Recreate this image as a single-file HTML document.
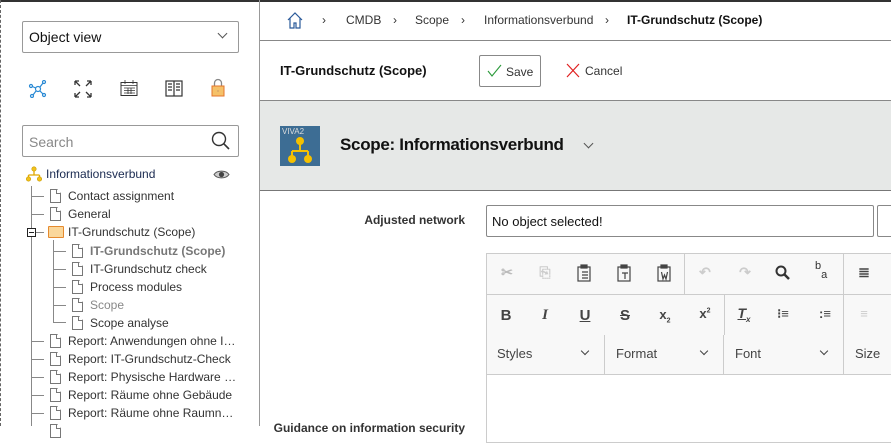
<!DOCTYPE html>
<html><head><meta charset="utf-8"><style>
*{box-sizing:border-box;margin:0;padding:0}
body{width:891px;height:426px;overflow:hidden;font-family:"Liberation Sans",Arial,sans-serif;font-size:13px;color:#222;background:#fff;position:relative}
.a{position:absolute}
.tr{position:absolute;font-size:12px;color:#333;white-space:nowrap}
.doc{position:absolute;width:11px;height:14px;border:1px solid #777;background:#fff;clip-path:polygon(0 0,65% 0,100% 30%,100% 100%,0 100%)}
.doc:after{content:"";position:absolute;right:-1px;top:-1px;width:4px;height:4px;border-left:1px solid #777;border-bottom:1px solid #777}
.hl{position:absolute;height:1px;background:#888}
.vl{position:absolute;width:1px;background:#888}
.tb{position:absolute;font-size:14px;color:#444;font-weight:bold;text-align:center;width:20px}
</style></head><body>
<div class="a" style="left:0;top:0;width:891px;height:2px;background:#333"></div>
<div class="a" style="left:0;top:0;width:1px;height:426px;border-left:1px dashed #666"></div>
<div class="a" style="left:259px;top:0;width:1px;height:426px;background:#999"></div>
<div class="a" style="left:22px;top:21px;width:217px;height:32px;border:1px solid #999;border-radius:2px;padding:7px 6px;font-size:14px;color:#111">Object view<span class="a" style="right:12px;top:8px;width:7px;height:7px;border-right:1.2px solid #555;border-bottom:1.2px solid #555;transform:rotate(45deg)"></span></div>
<svg class="a" style="left:28px;top:80px" width="20" height="18" viewBox="0 0 20 18"><g stroke="#2a8ad4" stroke-width="1.2" fill="none"><circle cx="10" cy="9" r="2.5"/><circle cx="3" cy="6" r="1.5"/><circle cx="16" cy="2" r="1.5"/><circle cx="16" cy="15" r="1.5"/><circle cx="4" cy="16" r="1.5"/><path d="M4.4 6.5 7.7 8M11.8 7.2 15 3M11.8 10.8 15 14M8 11 5 15"/></g></svg>
<svg class="a" style="left:74px;top:80px" width="18" height="18" viewBox="0 0 18 18"><g stroke="#333" stroke-width="1.3" fill="none"><path d="M1 1l5 5M1 1h4M1 1v4M17 1l-5 5M17 1h-4M17 1v4M1 17l5-5M1 17h4M1 17v-4M17 17l-5-5M17 17h-4M17 17v-4"/></g></svg>
<svg class="a" style="left:120px;top:80px" width="18" height="17" viewBox="0 0 18 17"><g stroke="#333" fill="none"><rect x="1" y="2.5" width="16" height="13"/><path d="M1 5.5h16M5 0v4M13 0v4M4 8h11M4 10.5h11M4 13h11M8 8v6M11 8v6" stroke-width=".8"/></g></svg>
<svg class="a" style="left:165px;top:80px" width="18" height="17" viewBox="0 0 18 17"><g stroke="#333" fill="none" stroke-width="1.2"><rect x="1" y="1" width="16" height="15"/><path d="M9 1v15M3 4h4M3 7h4M3 10h4M11 4h4M11 7h4M11 10h4"/></g></svg>
<svg class="a" style="left:211px;top:78px" width="14" height="19" viewBox="0 0 14 19"><path d="M3.5 8V5a3.5 3.5 0 0 1 7 0v3" stroke="#888" stroke-width="1.3" fill="none"/><rect x="1" y="8" width="12" height="10" fill="#f5c169" stroke="#e5752a"/><rect x="6.5" y="12" width="1" height="2" fill="#c96"/></svg>
<div class="a" style="left:22px;top:125px;width:217px;height:32px;border:1px solid #999;border-radius:2px;padding:8px 6px;font-size:14px;color:#888">Search</div>
<svg class="a" style="left:211px;top:131px" width="20" height="20" viewBox="0 0 20 20"><circle cx="8" cy="8" r="6.5" stroke="#333" stroke-width="1.4" fill="none"/><path d="M12.6 12.6 18 18" stroke="#333" stroke-width="1.6"/></svg>
<svg class="a" style="left:26px;top:166px" width="16" height="16" viewBox="0 0 16 16"><g fill="#f2c21b" stroke="#c99a00" stroke-width=".6"><circle cx="8" cy="3" r="2.2"/><circle cx="2.5" cy="13" r="2.2"/><circle cx="13.5" cy="13" r="2.2"/></g><path d="M8 5v4M2.5 9h11M2.5 9v2M13.5 9v2" stroke="#e0a800" stroke-width="1.3" fill="none"/></svg>
<div class="tr" style="left:46px;top:167px;color:#1a2a50">Informationsverbund</div>
<svg class="a" style="left:213px;top:169px" width="17" height="11" viewBox="0 0 17 11"><path d="M1 5.5C4 1 13 1 16 5.5 13 10 4 10 1 5.5Z" stroke="#555" fill="#ccc" stroke-width="1"/><circle cx="8.5" cy="5.5" r="2.6" fill="#444"/></svg>
<div class="vl" style="left:31px;top:186px;height:240px"></div>
<div class="hl" style="left:32px;top:196px;width:12px"></div><div class="doc" style="left:50px;top:189px"></div><div class="tr" style="left:68px;top:189px">Contact assignment</div>
<div class="hl" style="left:32px;top:214px;width:12px"></div><div class="doc" style="left:50px;top:207px"></div><div class="tr" style="left:68px;top:207px">General</div>
<div class="a" style="left:27px;top:228px;width:9px;height:9px;border:1px solid #222;background:#fff"><div class="a" style="left:1px;top:3px;width:5px;height:1px;background:#222"></div></div>
<div class="hl" style="left:36px;top:232px;width:8px"></div>
<div class="a" style="left:48px;top:226px;width:16px;height:12px;background:#fad79b;border:1px solid #e58a2f;border-radius:1px"></div>
<div class="tr" style="left:68px;top:225px">IT-Grundschutz (Scope)</div>
<div class="vl" style="left:53px;top:240px;height:83px"></div>
<div class="hl" style="left:54px;top:251px;width:12px"></div><div class="doc" style="left:72px;top:244px"></div><div class="tr" style="left:90px;top:244px;color:#777;font-weight:bold">IT-Grundschutz (Scope)</div>
<div class="hl" style="left:54px;top:269px;width:12px"></div><div class="doc" style="left:72px;top:262px"></div><div class="tr" style="left:90px;top:262px">IT-Grundschutz check</div>
<div class="hl" style="left:54px;top:287px;width:12px"></div><div class="doc" style="left:72px;top:280px"></div><div class="tr" style="left:90px;top:280px">Process modules</div>
<div class="hl" style="left:54px;top:305px;width:12px"></div><div class="doc" style="left:72px;top:298px"></div><div class="tr" style="left:90px;top:298px;color:#888">Scope</div>
<div class="hl" style="left:54px;top:322px;width:12px"></div><div class="doc" style="left:72px;top:316px"></div><div class="tr" style="left:90px;top:316px">Scope analyse</div>
<div class="hl" style="left:32px;top:341px;width:12px"></div><div class="doc" style="left:50px;top:334px"></div><div class="tr" style="left:68px;top:334px">Report: Anwendungen ohne I…</div>
<div class="hl" style="left:32px;top:359px;width:12px"></div><div class="doc" style="left:50px;top:352px"></div><div class="tr" style="left:68px;top:352px">Report: IT-Grundschutz-Check</div>
<div class="hl" style="left:32px;top:377px;width:12px"></div><div class="doc" style="left:50px;top:370px"></div><div class="tr" style="left:68px;top:370px">Report: Physische Hardware …</div>
<div class="hl" style="left:32px;top:395px;width:12px"></div><div class="doc" style="left:50px;top:388px"></div><div class="tr" style="left:68px;top:388px">Report: Räume ohne Gebäude</div>
<div class="hl" style="left:32px;top:413px;width:12px"></div><div class="doc" style="left:50px;top:406px"></div><div class="tr" style="left:68px;top:406px">Report: Räume ohne Raumn…</div>
<div class="doc" style="left:50px;top:424px"></div>
<svg class="a" style="left:287px;top:12px" width="16" height="17" viewBox="0 0 16 17"><path d="M1 8 8 1l7 7M3 6v10h4v-5h2v5h4V6" stroke="#2a5a9a" stroke-width="1.2" fill="none"/></svg>
<div class="a" style="left:322px;top:13px;font-size:12px;color:#333">›</div>
<div class="a" style="left:346px;top:13px;font-size:12px;color:#333">CMDB</div>
<div class="a" style="left:393px;top:13px;font-size:12px;color:#333">›</div>
<div class="a" style="left:415px;top:13px;font-size:12px;color:#333">Scope</div>
<div class="a" style="left:461px;top:13px;font-size:12px;color:#333">›</div>
<div class="a" style="left:484px;top:13px;font-size:12px;color:#333">Informationsverbund</div>
<div class="a" style="left:605px;top:13px;font-size:12px;color:#333">›</div>
<div class="a" style="left:627px;top:13px;font-size:12px;font-weight:bold;color:#111">IT-Grundschutz (Scope)</div>
<div class="a" style="left:260px;top:40px;width:631px;height:1px;background:#888"></div>
<div class="a" style="left:280px;top:63px;font-size:13px;font-weight:bold;color:#111">IT-Grundschutz (Scope)</div>
<div class="a" style="left:479px;top:55px;width:62px;height:32px;border:1px solid #888;border-radius:2px;font-size:12px;color:#333;padding:9px 0 0 26px">Save</div>
<svg class="a" style="left:487px;top:64px" width="15" height="13" viewBox="0 0 15 13"><path d="M1 7l4 5 9-11" stroke="#2a9a3a" stroke-width="1.1" fill="none"/></svg>
<svg class="a" style="left:566px;top:63px" width="14" height="15" viewBox="0 0 14 15"><path d="M1 1l12 13M13 1 1 14" stroke="#e02020" stroke-width="1.2"/></svg>
<div class="a" style="left:585px;top:64px;font-size:12px;color:#333">Cancel</div>
<div class="a" style="left:260px;top:100px;width:631px;height:91px;background:#e6e8e7;border-top:1px solid #888;border-bottom:1px solid #777"></div>
<div class="a" style="left:280px;top:126px;width:40px;height:40px;background:#3d6d94"></div>
<div class="a" style="left:282px;top:127px;font-size:8px;color:#ddd">VIVA2</div>
<svg class="a" style="left:287px;top:135px" width="26" height="30" viewBox="0 0 26 30"><g fill="#f5c000"><circle cx="13" cy="6" r="4"/><circle cx="5" cy="24" r="4"/><circle cx="21" cy="24" r="4"/></g><path d="M13 9v7M5 16h16M5 16v5M21 16v5" stroke="#f5c000" stroke-width="2" fill="none"/></svg>
<div class="a" style="left:340px;top:135px;font-size:17px;font-weight:bold;color:#111;letter-spacing:-.3px">Scope: Informationsverbund</div>
<span class="a" style="left:585px;top:140px;width:7px;height:7px;border-right:1.2px solid #555;border-bottom:1.2px solid #555;transform:rotate(45deg)"></span>
<div class="a" style="left:300px;top:213px;width:165px;text-align:right;font-size:12px;font-weight:bold;color:#333">Adjusted network</div>
<div class="a" style="left:486px;top:205px;width:388px;height:32px;border:1px solid #888;border-radius:2px;padding:8px 5px;font-size:13px;color:#111">No object selected!</div>
<div class="a" style="left:877px;top:205px;width:20px;height:32px;border:1px solid #888;border-radius:2px"></div>
<div class="a" style="left:486px;top:253px;width:410px;height:190px;border:1px solid #ccc"></div>
<div class="a" style="left:487px;top:254px;width:410px;height:120px;background:#f8f8f8"></div>
<div class="a" style="left:486px;top:294px;width:410px;height:1px;background:#ccc"></div>
<div class="a" style="left:486px;top:374px;width:410px;height:1px;background:#ccc"></div>
<div class="a" style="left:684px;top:254px;width:1px;height:40px;background:#ccc"></div>
<div class="a" style="left:843px;top:254px;width:1px;height:40px;background:#ccc"></div>
<div class="a" style="left:724px;top:295px;width:1px;height:40px;background:#ccc"></div>
<div class="a" style="left:843px;top:295px;width:1px;height:40px;background:#ccc"></div>
<div class="a" style="left:604px;top:335px;width:1px;height:39px;background:#ccc"></div>
<div class="a" style="left:723px;top:335px;width:1px;height:39px;background:#ccc"></div>
<div class="a" style="left:843px;top:335px;width:1px;height:39px;background:#ccc"></div>
<div class="tb" style="left:497px;top:264px;color:#bbb">✂</div>
<div class="tb" style="left:535px;top:264px;color:#ccc">⎘</div>
<svg class="a" style="left:577px;top:264px" width="16" height="18" viewBox="0 0 16 18"><g stroke="#444" fill="none" stroke-width="1.2"><rect x="1" y="3" width="12" height="14"/><rect x="4" y="1" width="6" height="3" fill="#444"/><path d="M5 8h6M5 11h6M5 14h6"/></g></svg>
<svg class="a" style="left:617px;top:264px" width="16" height="18" viewBox="0 0 16 18"><g stroke="#444" fill="none" stroke-width="1.2"><rect x="1" y="3" width="12" height="14"/><rect x="4" y="1" width="6" height="3" fill="#444"/><path d="M5 9h6M8 9v6"/></g></svg>
<svg class="a" style="left:657px;top:264px" width="16" height="18" viewBox="0 0 16 18"><g stroke="#444" fill="none" stroke-width="1.2"><rect x="1" y="3" width="12" height="14"/><rect x="4" y="1" width="6" height="3" fill="#444"/><path d="M4.5 8l1.5 7 1.5-4 1.5 4 1.5-7"/></g></svg>
<div class="tb" style="left:695px;top:264px;color:#ccc">↶</div>
<div class="tb" style="left:735px;top:264px;color:#ccc">↷</div>
<svg class="a" style="left:775px;top:265px" width="16" height="16" viewBox="0 0 16 16"><circle cx="6" cy="6" r="4.5" stroke="#333" stroke-width="2" fill="none"/><path d="M9.5 9.5 14 14" stroke="#333" stroke-width="2.5"/></svg>
<div class="a" style="left:815px;top:262px;font-size:11px;color:#333;line-height:9px">b<br>&nbsp;&nbsp;a</div>
<div class="tb" style="left:854px;top:264px;font-size:14px">≣</div>
<div class="tb" style="left:496px;top:307px;font-size:15px">B</div>
<div class="tb" style="left:535px;top:307px;font-size:15px;font-style:italic;font-family:'Liberation Serif',serif">I</div>
<div class="tb" style="left:575px;top:307px;font-size:15px;text-decoration:underline">U</div>
<div class="tb" style="left:615px;top:307px;font-size:15px;text-decoration:line-through">S</div>
<div class="tb" style="left:655px;top:307px;font-size:13px">x<sub style="font-size:7px">2</sub></div>
<div class="tb" style="left:695px;top:306px;font-size:13px">x<sup style="font-size:7px">2</sup></div>
<div class="tb" style="left:734px;top:305px;font-size:14px;font-style:italic;text-decoration:underline">T<sub style="font-size:8px">x</sub></div>
<div class="tb" style="left:773px;top:306px;font-size:13px">⁝≡</div>
<div class="tb" style="left:815px;top:306px;font-size:13px">:≡</div>
<div class="tb" style="left:854px;top:306px;font-size:13px;color:#ccc">≡</div>
<div class="a" style="left:497px;top:346px;font-size:13px;color:#444">Styles</div>
<div class="a" style="left:616px;top:346px;font-size:13px;color:#444">Format</div>
<div class="a" style="left:735px;top:346px;font-size:13px;color:#444">Font</div>
<div class="a" style="left:855px;top:346px;font-size:13px;color:#444">Size</div>
<span class="a" style="left:582px;top:348px;width:6px;height:6px;border-right:1.2px solid #444;border-bottom:1.2px solid #444;transform:rotate(45deg)"></span>
<span class="a" style="left:701px;top:348px;width:6px;height:6px;border-right:1.2px solid #444;border-bottom:1.2px solid #444;transform:rotate(45deg)"></span>
<span class="a" style="left:821px;top:348px;width:6px;height:6px;border-right:1.2px solid #444;border-bottom:1.2px solid #444;transform:rotate(45deg)"></span>
<div class="a" style="left:270px;top:421px;width:195px;text-align:right;font-size:12px;font-weight:bold;color:#333;white-space:nowrap">Guidance on information security</div>
</body></html>
